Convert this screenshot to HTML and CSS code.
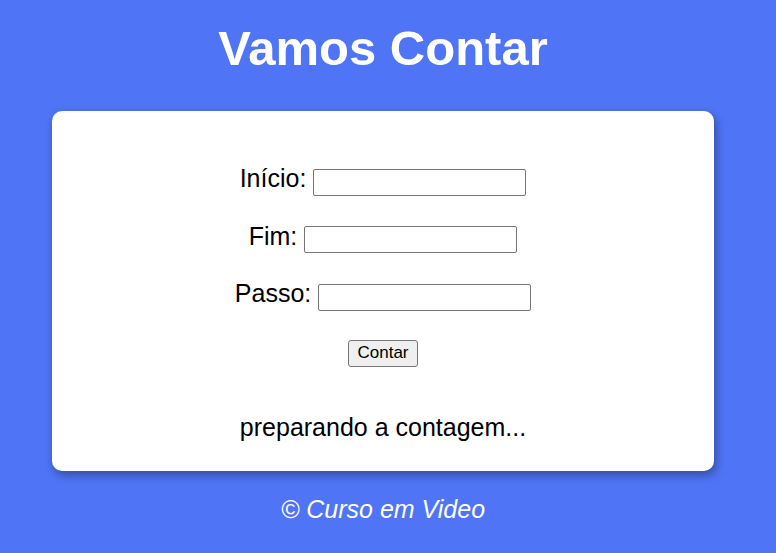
FILE: index.html
```html
<!DOCTYPE html>
<html lang="pt-BR">
<head>
<meta charset="utf-8">
<title>Vamos Contar</title>
<link rel="stylesheet" href="styles.css">
</head>
<body>
<div class="page">
  <header class="header">
    <h1 class="title">Vamos Contar</h1>
  </header>
  <section class="card">
    <div class="form">
      <div class="row"><label for="inicio">Início:</label> <input type="text" id="inicio" class="field"></div>
      <div class="row"><label for="fim">Fim:</label> <input type="text" id="fim" class="field"></div>
      <div class="row"><label for="passo">Passo:</label> <input type="text" id="passo" class="field"></div>
      <button type="button" class="btn">Contar</button>
    </div>
    <div class="result">preparando a contagem...</div>
  </section>
  <footer class="footer">&copy; Curso em Video</footer>
</div>
</body>
</html>
```
FILE: styles.css
```css
html, body {
  margin: 0;
  padding: 0;
}
body {
  background: rgb(79, 116, 245);
  font-family: "Liberation Sans", Arial, sans-serif;
}
.page {
  width: 766px;
  padding-top: 20px;
}
.header {
  text-align: center;
  margin-bottom: 35px;
}
.title {
  margin: 0;
  font-size: 49px;
  line-height: 56px;
  font-weight: bold;
  color: #ffffff;
}
.card {
  width: 662px;
  margin: 0 auto;
  background: #ffffff;
  border-radius: 10px;
  box-shadow: 2px 4px 10px rgba(0, 0, 0, 0.35);
  padding: 53px 0 30px;
  box-sizing: border-box;
}
.form {
  display: flex;
  flex-direction: column;
  align-items: center;
  gap: 26px;
}
.row {
  text-align: center;
  font-size: 25px;
  line-height: 28px;
  color: #000;
}
.field {
  box-sizing: border-box;
  width: 213px;
  height: 27px;
  border: 1px solid #767676;
  border-radius: 2px;
  padding: 1px 2px;
  font-family: "Liberation Sans", Arial, sans-serif;
  font-size: 16px;
  background: #fff;
  vertical-align: baseline;
}
.btn {
  margin-top: 3px;
  box-sizing: border-box;
  width: 70px;
  height: 27px;
  padding: 0;
  border: 1px solid #767676;
  border-radius: 3px;
  background: #efefef;
  font-family: "Liberation Sans", Arial, sans-serif;
  font-size: 17px;
  color: #000;
}
.result {
  margin-top: 46px;
  text-align: center;
  font-size: 25px;
  line-height: 28px;
  color: #000;
}
.footer {
  margin-top: 24px;
  text-align: center;
  font-size: 25px;
  line-height: 28px;
  font-style: italic;
  color: #ffffff;
}
```
